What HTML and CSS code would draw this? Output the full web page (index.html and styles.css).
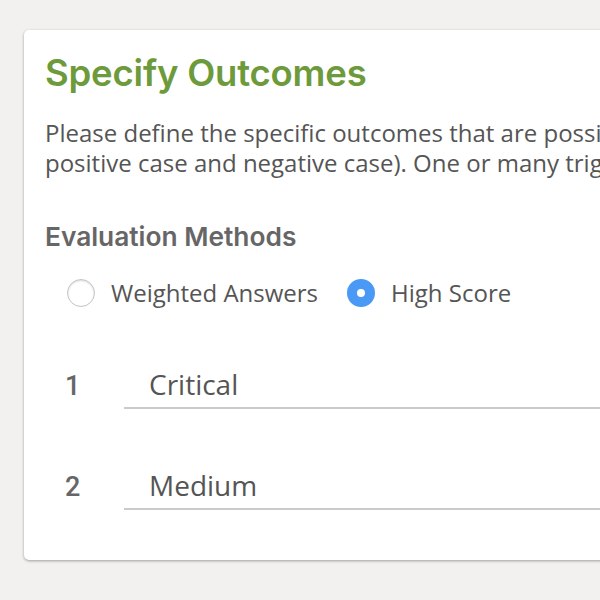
FILE: index.html
```html
<!DOCTYPE html>
<html>
<head>
<meta charset="utf-8">
<link rel="stylesheet" href="styles.css">
</head>
<body>
<div class="page">
  <div class="card">
    <h1 class="title">Specify Outcomes</h1>
    <p class="desc">Please define the specific outcomes that are possible for this assessment (for example, a positive case and negative case). One or many triggers can be set up for each outcome.</p>
    <h2 class="subtitle">Evaluation Methods</h2>
    <div class="radios">
      <label class="radio"><span class="dot"></span><span class="label">Weighted Answers</span></label>
      <label class="radio"><span class="dot checked"></span><span class="label">High Score</span></label>
    </div>
    <div class="outcomes">
      <div class="row"><span class="num">1</span><div class="field">Critical</div></div>
      <div class="row"><span class="num">2</span><div class="field">Medium</div></div>
    </div>
  </div>
</div>
</body>
</html>
```

FILE: styles.css
```css
html, body {
  margin: 0;
  padding: 0;
  background: #f2f1ef;
  overflow: hidden;
  width: 600px;
  height: 600px;
}
.page {
  padding: 30px 0 0 24px;
}
.card {
  width: 1100px;
  height: 530px;
  box-sizing: border-box;
  background: #fff;
  border-radius: 5px;
  box-shadow: 0 1px 3px rgba(0,0,0,0.35);
  padding: 23px 21px 0 21px;
}
.title {
  margin: 0;
  font-family: Inter, "Open Sans", sans-serif;
  font-weight: 600;
  font-size: 36.5px;
  line-height: 40px;
  letter-spacing: -0.2px;
  color: #6d9a3a;
}
.desc {
  margin: 25px 0 0 0;
  width: 1030px;
  font-family: "Open Sans", sans-serif;
  font-size: 24px;
  line-height: 30px;
  color: #555;
}
.subtitle {
  margin: 43px 0 0 0;
  font-family: Inter, "Open Sans", sans-serif;
  font-weight: 600;
  font-size: 26.3px;
  line-height: 32px;
  color: #666;
}
.radios {
  display: flex;
  gap: 29px;
  margin: 24px 0 0 22px;
  align-items: center;
}
.radio {
  display: flex;
  align-items: center;
  gap: 16px;
}
.dot {
  width: 28px;
  height: 28px;
  border-radius: 50%;
  border: 1px solid #c4c4c4;
  box-shadow: inset 0 1px 2px rgba(0,0,0,0.15);
  background: #fff;
  box-sizing: border-box;
}
.dot.checked {
  border: 10px solid #4a9af5;
  box-shadow: none;
}
.label {
  font-family: "Open Sans", sans-serif;
  font-size: 24px;
  line-height: 32px;
  color: #555;
}
.outcomes {
  margin-top: 57px;
  display: flex;
  flex-direction: column;
  gap: 58px;
}
.row {
  display: flex;
  align-items: baseline;
}
.num {
  width: 79px;
  padding-left: 20px;
  box-sizing: border-box;
  font-family: Roboto, sans-serif;
  font-weight: 500;
  font-size: 27px;
  line-height: 36px;
  color: #666;
}
.field {
  flex: 1;
  border-bottom: 2px solid #cacaca;
  padding: 0 0 5px 25px;
  font-family: "Open Sans", sans-serif;
  font-size: 28px;
  line-height: 36px;
  color: #555;
}
```
